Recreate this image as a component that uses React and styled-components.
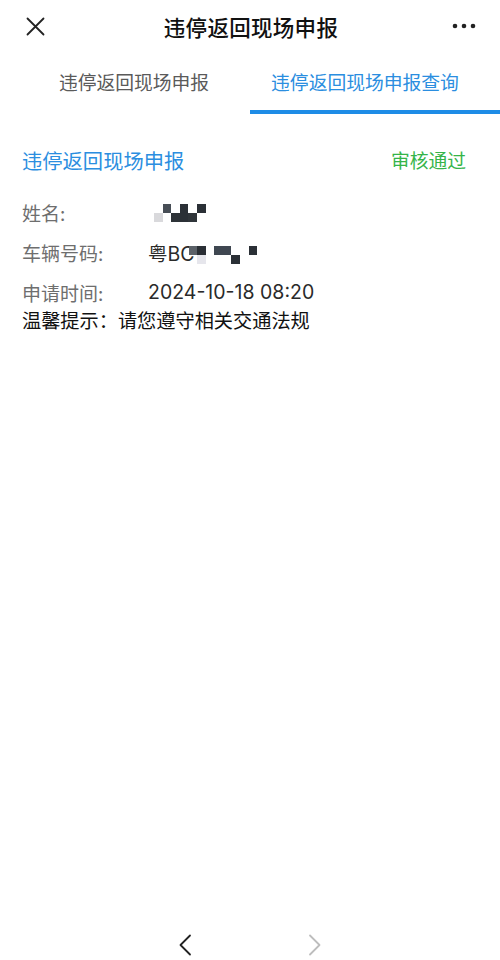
import React from 'react'
import styled, {createGlobalStyle} from 'styled-components'

const GlobalStyle = createGlobalStyle`
  html, body {
    margin: 0;
    padding: 0;
    background: #fff;
  }
  body {
    font-family: Inter, "Noto Sans CJK SC", sans-serif;
    color: #222;
  }
`

const namePixels = [
    [null, '#474e56', null, '#2b3036', null, '#2b3036', null],
    ['#d9d9dc', null, '#2e3338', '#2b3036', '#30353a', null, null],
]

const platePixels = [
    ['#5b6168', '#2a2f35', null, '#3f4751', '#3f4751', null, null, '#2b3036'],
    [null, '#e6e6ec', null, null, null, '#2b3036', null, null],
]

const Mosaic = ({cells, shift, drop}) => (
    <MosaicGrid cols={cells[0].length} shift={shift} drop={drop}>
        {cells.flat().map((c, i) => <Cell key={i} color={c} />)}
    </MosaicGrid>
)

const CloseIcon = () => (
    <svg width="19" height="19" viewBox="0 0 19 19">
        <path d="M1.5 1.5 L17.5 17.5 M17.5 1.5 L1.5 17.5" stroke="#222" strokeWidth="1.8" strokeLinecap="round" />
    </svg>
)

const MoreIcon = () => (
    <svg width="24" height="6" viewBox="0 0 24 6">
        <circle cx="3" cy="3" r="2.3" fill="#222" />
        <circle cx="12" cy="3" r="2.3" fill="#222" />
        <circle cx="21" cy="3" r="2.3" fill="#222" />
    </svg>
)

const Chevron = ({dir, color}) => (
    <svg width="14" height="22" viewBox="0 0 14 22">
        <path
            d={dir === 'left' ? 'M12 1.5 L2.5 11 L12 20.5' : 'M2 1.5 L11.5 11 L2 20.5'}
            fill="none"
            stroke={color}
            strokeWidth="1.8"
            strokeLinecap="round"
            strokeLinejoin="round"
        />
    </svg>
)

export default function App() {
    return (
        <Page>
            <GlobalStyle />
            <Header>
                <IconSlot><CloseIcon /></IconSlot>
                <Title>违停返回现场申报</Title>
                <IconSlot right><MoreIcon /></IconSlot>
            </Header>
            <Tabs>
                <Tab shift="18px">违停返回现场申报</Tab>
                <Tab active shift="-20px">违停返回现场申报查询</Tab>
            </Tabs>
            <Content>
                <RecordHead>
                    <RecordTitle>违停返回现场申报</RecordTitle>
                    <Status>审核通过</Status>
                </RecordHead>
                <InfoRow>
                    <Label>姓名:</Label>
                    <Value><Mosaic cells={namePixels} shift="6px" drop="2px" /></Value>
                </InfoRow>
                <InfoRow>
                    <Label>车辆号码:</Label>
                    <Value>粤BC<Mosaic cells={platePixels} shift="-6px" drop="6px" /></Value>
                </InfoRow>
                <InfoRow>
                    <Label>申请时间:</Label>
                    <Value>2024-10-18 08:20</Value>
                </InfoRow>
                <Tip>温馨提示：请您遵守相关交通法规</Tip>
            </Content>
            <BottomNav>
                <Chevron dir="left" color="#222" />
                <Chevron dir="right" color="#bdbdbd" />
            </BottomNav>
        </Page>
    )
}

const Page = styled.div`
  width: 500px;
  height: 960px;
  display: flex;
  flex-direction: column;
  background: #fff;
  overflow: hidden;
`

const Header = styled.header`
  height: 52px;
  display: flex;
  align-items: center;
  padding: 0 24px 0 26px;
`

const IconSlot = styled.div`
  width: 60px;
  display: flex;
  justify-content: ${p => (p.right ? 'flex-end' : 'flex-start')};
  align-items: center;
`

const Title = styled.h1`
  flex: 1;
  margin: 0;
  text-align: center;
  font-family: "Noto Sans CJK SC", sans-serif;
  font-size: 21.5px;
  font-weight: 500;
  color: #111;
  letter-spacing: 0.3px;
`

const Tabs = styled.nav`
  display: grid;
  grid-template-columns: 1fr 1fr;
  height: 62px;
`

const Tab = styled.div`
  display: flex;
  align-items: center;
  justify-content: center;
  padding-left: ${p => (p.shift.startsWith('-') ? '0' : p.shift)};
  padding-right: ${p => (p.shift.startsWith('-') ? p.shift.slice(1) : '0')};
  font-family: "Noto Sans CJK SC", sans-serif;
  font-size: 18.8px;
  color: ${p => (p.active ? '#2b8ee0' : '#5a5a5a')};
  border-bottom: 4px solid ${p => (p.active ? '#1e8ce6' : 'transparent')};
  box-sizing: border-box;
  padding-top: 1px;
`

const Content = styled.main`
  padding: 31px 34px 0 22px;
  display: flex;
  flex-direction: column;
`

const RecordHead = styled.div`
  display: flex;
  justify-content: space-between;
  align-items: center;
  line-height: 28px;
  margin-bottom: 24px;
`

const RecordTitle = styled.div`
  font-family: "Noto Sans CJK SC", sans-serif;
  font-size: 20.3px;
  color: #2b8ee0;
`

const Status = styled.div`
  font-family: "Noto Sans CJK SC", sans-serif;
  font-size: 18.8px;
  color: #35b449;
  padding-top: 1px;
`

const InfoRow = styled.div`
  display: flex;
  align-items: center;
  height: 28px;
  margin-bottom: 12px;
  &:nth-of-type(4) {
    margin-bottom: 0;
  }
`

const Label = styled.div`
  width: 126px;
  flex-shrink: 0;
  font-family: "Noto Sans CJK SC", sans-serif;
  font-size: 19px;
  color: #6e6e6e;
`

const Value = styled.div`
  display: flex;
  align-items: center;
  font-family: Inter, "Noto Sans CJK SC", sans-serif;
  font-size: 19.5px;
  color: #2a2a2a;
`

const MosaicGrid = styled.div`
  display: grid;
  grid-template-columns: repeat(${p => p.cols}, 8.6px);
  grid-auto-rows: 9px;
  margin-left: ${p => p.shift};
  margin-top: ${p => p.drop};
`

const Cell = styled.span`
  background: ${p => p.color || 'transparent'};
`

const Tip = styled.div`
  font-family: "Noto Sans CJK SC", sans-serif;
  font-size: 19.2px;
  line-height: 28px;
  color: #111;
`

const BottomNav = styled.footer`
  margin-top: auto;
  height: 58px;
  display: flex;
  justify-content: center;
  align-items: flex-start;
  gap: 116px;
  padding-top: 32px;
  box-sizing: border-box;
`
